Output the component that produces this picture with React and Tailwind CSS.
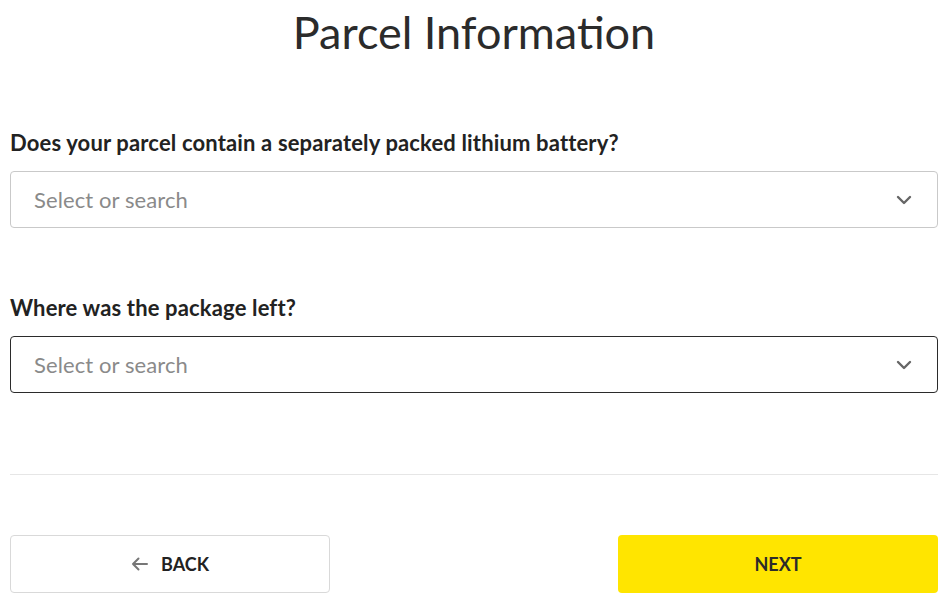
import React from "react";

const Chevron = () => (
  <svg width="16" height="10" viewBox="0 0 16 10" fill="none">
    <path d="M2 2l6 6 6-6" stroke="#666" strokeWidth="2.4" strokeLinecap="round" strokeLinejoin="round" />
  </svg>
);

const Select = ({ dark }) => (
  <div
    className={`flex items-center justify-between h-[57px] rounded-[4px] border bg-white pl-[23px] pr-[25px] ${
      dark ? "border-[#2b2b2b]" : "border-[#c9c9c9]"
    }`}
  >
    <span className="text-[22px] text-[#8a8a8a] tracking-[0.1px]">Select or search</span>
    <Chevron />
  </div>
);

export default function App() {
  return (
    <div className="w-[952px] h-[602px] bg-white pl-[10px] pr-[14px] text-[#222]" style={{ fontFamily: "Lato, 'Noto Sans', sans-serif" }}>
      <h1 className="text-center text-[45px] leading-[64px] font-normal text-[#2b2b2b]">Parcel Information</h1>
      <div className="mt-[65px]">
        <label className="block text-[22px] font-bold leading-[28px] tracking-[0.15px] text-[#222]">
          Does your parcel contain a separately packed lithium battery?
        </label>
        <div className="mt-[14px]">
          <Select />
        </div>
      </div>
      <div className="mt-[66px]">
        <label className="block text-[22px] font-bold leading-[28px] tracking-[0.15px] text-[#222]">Where was the package left?</label>
        <div className="mt-[14px]">
          <Select dark />
        </div>
      </div>
      <div className="mt-[81px] border-t border-[#e6e6e6]" />
      <div className="mt-[60px] flex justify-between">
        <button className="w-[320px] h-[58px] rounded-[4px] border border-[#d9d9d9] bg-white flex items-center justify-center gap-[12px] text-[#222] font-bold text-[18px]">
          <svg width="18" height="14" viewBox="0 0 18 14" fill="none">
            <path d="M16 7H2M7.5 1.5L2 7l5.5 5.5" stroke="#777" strokeWidth="2" strokeLinecap="round" strokeLinejoin="round" />
          </svg>
          <span>BACK</span>
        </button>
        <button className="w-[320px] h-[58px] rounded-[4px] bg-[#ffe500] flex items-center justify-center text-[#2b2b2b] font-bold text-[18px]">
          NEXT
        </button>
      </div>
    </div>
  );
}
